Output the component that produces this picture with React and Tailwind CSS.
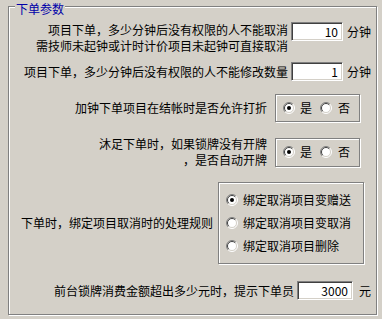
import React from 'react';

const font = { fontFamily: '"Noto Sans CJK SC", "Liberation Sans", sans-serif' };

const Radio = ({ checked }) => (
  <svg width="12" height="12" viewBox="0 0 12 12" className="shrink-0">
    <circle cx="6" cy="6" r="5" fill="#fff" />
    <path d="M9.9 2.1 A5.5 5.5 0 0 0 2.1 9.9" fill="none" stroke="#808080" strokeWidth="1" />
    <path d="M2.1 9.9 A5.5 5.5 0 0 0 9.9 2.1" fill="none" stroke="#ffffff" strokeWidth="1" />
    <path d="M9.2 2.8 A4.5 4.5 0 0 0 2.8 9.2" fill="none" stroke="#404040" strokeWidth="1" />
    <path d="M2.8 9.2 A4.5 4.5 0 0 0 9.2 2.8" fill="none" stroke="#d4d0c8" strokeWidth="1" />
    {checked && <circle cx="6" cy="6" r="2" fill="#000" />}
  </svg>
);

const NumBox = ({ value, width }) => (
  <div
    className={`${width} h-[19px] shrink-0 bg-white border border-t-[#808080] border-l-[#808080] border-r-white border-b-white shadow-[inset_1px_1px_0_#404040,inset_-1px_-1px_0_#d4d0c8] flex items-center justify-end pr-[4px] text-[12px] text-black`}
  >
    {value}
  </div>
);

const Etched = ({ className, children }) => (
  <div className={`border border-[#808080] shadow-[inset_1px_1px_0_#fff,1px_1px_0_#fff] ${className}`}>
    {children}
  </div>
);

const YesNo = () => (
  <div className="flex items-center pl-[7px]">
    <Radio checked />
    <span className="ml-[5px]">是</span>
    <span className="ml-[8px] flex"><Radio /></span>
    <span className="ml-[6px]">否</span>
  </div>
);

export default function App() {
  return (
    <div className="w-[382px] h-[319px] bg-[#d4d0c8] overflow-hidden pt-[6px] pl-[8px] text-[12px] text-black" style={font}>
      <div className="relative w-[369px] h-[309px] border border-[#808080] shadow-[inset_1px_1px_0_#fff,1px_1px_0_#fff]">
        <span className="absolute left-[6px] top-[-5px] px-[1px] bg-[#d4d0c8] text-[#0000a8] leading-[14px]">下单参数</span>

        <div className="mt-[15px] flex justify-end items-start pr-[5px]">
          <div className="text-right leading-[16px] mr-[3px]">
            <div>项目下单，多少分钟后没有权限的人不能取消</div>
            <div>需技师未起钟或计时计价项目未起钟可直接取消</div>
          </div>
          <NumBox value="10" width="w-[52px]" />
          <span className="ml-[4px] w-[24px] leading-[19px]">分钟</span>
        </div>

        <div className="mt-[8px] flex justify-end items-center pr-[5px]">
          <span className="mr-[3px]">项目下单，多少分钟后没有权限的人不能修改数量</span>
          <NumBox value="1" width="w-[52px]" />
          <span className="ml-[4px] w-[24px]">分钟</span>
        </div>

        <div className="mt-[13px] flex justify-end items-center pr-[16px]">
          <span className="mr-[8px]">加钟下单项目在结帐时是否允许打折</span>
          <Etched className="w-[85px] h-[28px] flex items-center">
            <YesNo />
          </Etched>
        </div>

        <div className="mt-[14px] flex justify-end items-center pr-[16px]">
          <div className="mr-[8px] text-right leading-[16px]">
            <div>沐足下单时，如果锁牌没有开牌</div>
            <div>，是否自动开牌</div>
          </div>
          <Etched className="w-[85px] h-[29px] flex items-center">
            <YesNo />
          </Etched>
        </div>

        <div className="mt-[14px] flex justify-end items-center pr-[12px]">
          <span className="mr-[5px]">下单时，绑定项目取消时的处理规则</span>
          <Etched className="w-[146px] h-[82px] pt-[5px] pl-[7px]">
            {[
              ['绑定取消项目变赠送', true],
              ['绑定取消项目变取消', false],
              ['绑定取消项目删除', false],
            ].map(([label, on]) => (
              <div key={label} className="h-[23px] flex items-center">
                <Radio checked={on} />
                <span className="ml-[5px]">{label}</span>
              </div>
            ))}
          </Etched>
        </div>

        <div className="mt-[17px] flex justify-end items-center pr-[5px]">
          <span className="mr-[3px]">前台锁牌消费金额超出多少元时，提示下单员</span>
          <NumBox value="3000" width="w-[56px]" />
          <span className="ml-[6px] w-[12px]">元</span>
        </div>
      </div>
    </div>
  );
}
